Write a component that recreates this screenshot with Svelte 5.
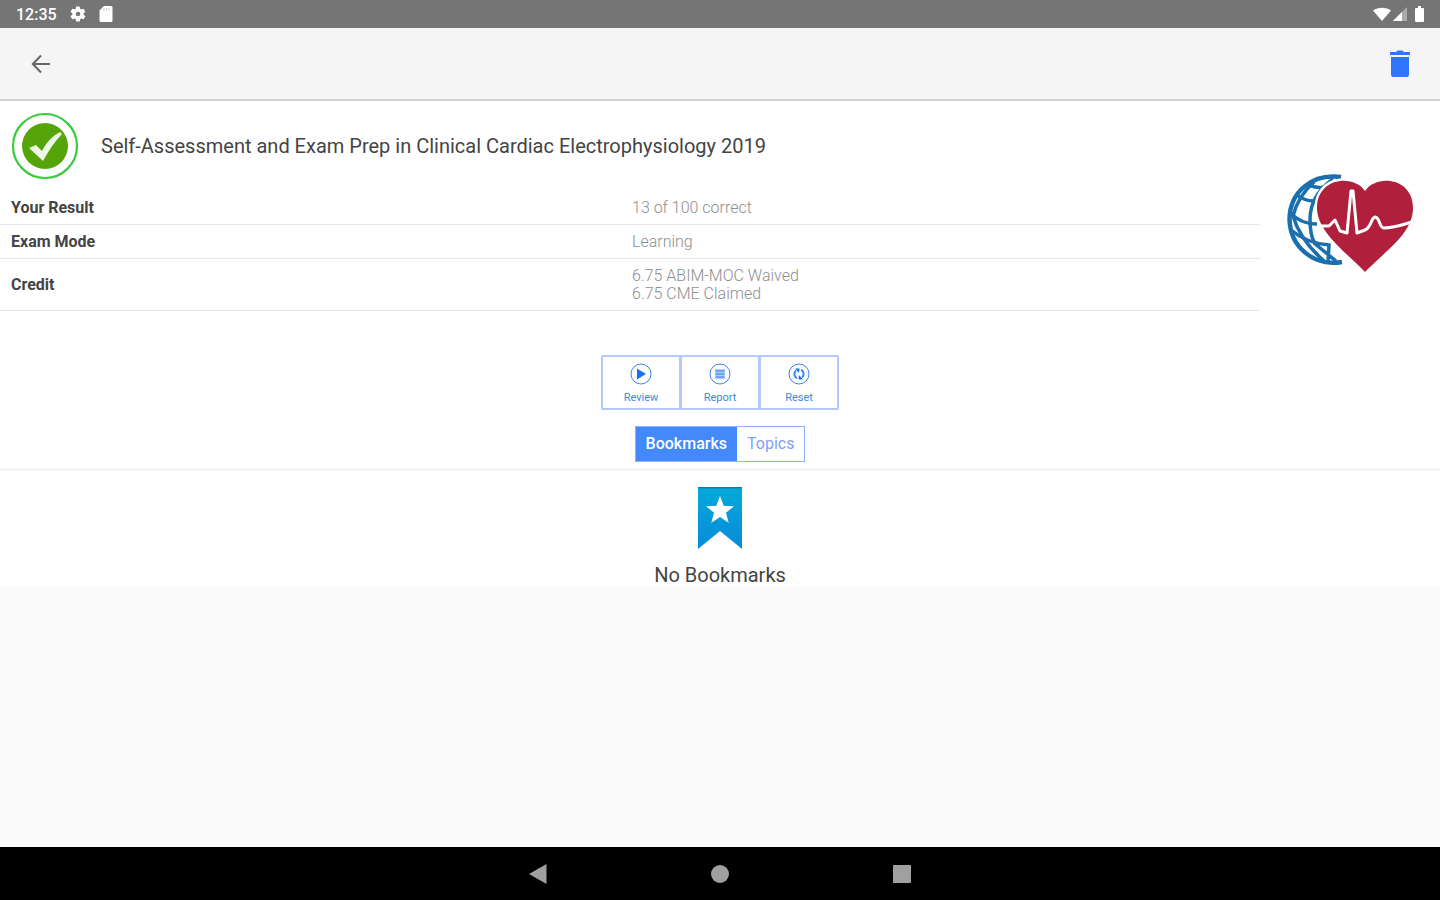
<script lang="ts">
	let tab = $state('Bookmarks');

	const tabs = ['Bookmarks', 'Topics'];

	const results = [
		{ label: 'Your Result', lines: ['13 of 100 correct'] },
		{ label: 'Exam Mode', lines: ['Learning'] },
		{ label: 'Credit', lines: ['6.75 ABIM-MOC Waived', '6.75 CME Claimed'] },
	];

	const actions = ['Review', 'Report', 'Reset'];
</script>

<div class="screen">
	<div class="status-bar">
		<div class="status-group left">
			<span class="time">12:35</span>
			<svg width="18" height="18" viewBox="0 0 24 24" fill="#fff">
				<path d="M19.4 13a7.5 7.5 0 0 0 0-2l2.1-1.6a.5.5 0 0 0 .1-.7l-2-3.4a.5.5 0 0 0-.6-.2l-2.5 1a7.3 7.3 0 0 0-1.7-1l-.4-2.6a.5.5 0 0 0-.5-.4h-4a.5.5 0 0 0-.5.4L9 5.1a7.7 7.7 0 0 0-1.7 1l-2.5-1a.5.5 0 0 0-.6.2l-2 3.4a.5.5 0 0 0 .1.7L4.5 11a7.5 7.5 0 0 0 0 2l-2.2 1.6a.5.5 0 0 0-.1.7l2 3.4c.1.2.4.3.6.2l2.5-1a7.3 7.3 0 0 0 1.7 1l.4 2.6c0 .3.2.4.5.4h4c.3 0 .5-.1.5-.4l.4-2.6a7.7 7.7 0 0 0 1.7-1l2.5 1c.2.1.5 0 .6-.2l2-3.4a.5.5 0 0 0-.1-.7zM12 15a3 3 0 1 1 0-6 3 3 0 0 1 0 6z" />
			</svg>
			<svg width="14" height="18" viewBox="0 0 14 18">
				<path d="M5 1h7a1.5 1.5 0 0 1 1.5 1.5v13A1.5 1.5 0 0 1 12 17H2a1.5 1.5 0 0 1-1.5-1.5V5.5z" fill="#fff" />
				<path d="M5 3v2.5M7.5 3v2.5M10 3v2.5" stroke="#ccc" />
			</svg>
		</div>
		<div class="status-group right">
			<svg width="18" height="14" viewBox="0 0 18 14">
				<path d="M0 3.5C5-.3 13-.3 18 3.5L9 14z" fill="#fff" />
			</svg>
			<svg width="14" height="14" viewBox="0 0 14 14">
				<path d="M14 0v14H0z" fill="#aaa" />
				<path d="M9 5v9H0z" fill="#fff" />
			</svg>
			<svg class="battery" width="9" height="16" viewBox="0 0 9 16">
				<path d="M3 0h3v2h2a1 1 0 0 1 1 1v12a1 1 0 0 1-1 1H1a1 1 0 0 1-1-1V3a1 1 0 0 1 1-1h2z" fill="#fff" />
			</svg>
		</div>
	</div>

	<header class="toolbar">
		<button aria-label="Back">
			<svg width="20" height="20" viewBox="0 0 20 20" fill="none" stroke="#666" stroke-width="2">
				<path d="M19 10H2M10 1.5L1.8 10l8.2 8.5" />
			</svg>
		</button>
		<button aria-label="Delete">
			<svg width="22" height="28" viewBox="0 0 22 28" fill="#2f76fb">
				<path d="M1 2h6l1.5-1.5h5L15 2h6v3H1z" />
				<path d="M2 7h18v18a2 2 0 0 1-2 2H4a2 2 0 0 1-2-2z" />
			</svg>
		</button>
	</header>

	<main>
		<section class="summary">
			<div class="details">
				<div class="heading">
					<svg width="68" height="68" viewBox="0 0 68 68">
						<circle cx="34" cy="34" r="32" fill="#fff" stroke="#3bcb3f" stroke-width="2.2" />
						<circle cx="34" cy="34" r="23" fill="#55a50a" />
						<path d="M18 36l7-3 6 6c4-8 10-15 18-19l2 2c-7 7-13 16-19 27z" fill="#eef6e6" />
					</svg>
					<h1>Self-Assessment and Exam Prep in Clinical Cardiac Electrophysiology 2019</h1>
				</div>
				<table>
					<tbody>
						{#each results as row}
							<tr>
								<th scope="row">{row.label}</th>
								<td>
									{#each row.lines as line}
										<div>{line}</div>
									{/each}
								</td>
							</tr>
						{/each}
					</tbody>
				</table>
			</div>
			<div class="logo">
				<svg width="128" height="100" viewBox="0 0 128 100">
					<!-- globe -->
					<g fill="none" stroke="#1b6fae" stroke-width="3.5">
						<path d="M55 3C26-1 4 18 3.5 45C4 73 28 93 56 88" stroke-width="4.5" />
						<path d="M47 5Q24 22 24 45Q24 60 28 68" />
						<path d="M28 8Q12 22 7 42Q14 66 38 87" />
						<path d="M22 10Q30 15 38 13M10 20Q18 27 28 27M4 38Q14 50 31 50M5 56Q20 69 43 71L42 88M28 69L50 87" />
					</g>
					<!-- heart and pulse -->
					<path d="M79 17C68 0 31 3 31 34C31 58 60 78 79 98C98 78 127 60 127 34C127 3 90 0 79 17z" fill="#b01f3c" stroke="#fff" stroke-width="5" paint-order="stroke" />
					<path d="M33 52h10l6-6 5 11 7 2 4-42h2l4 42 8-3c6-2 6-12 10-13 5 0 4 11 9 11 10 0 18-3 28-6" fill="none" stroke="#fff" stroke-width="3" stroke-linejoin="round" />
				</svg>
			</div>
		</section>

		<section class="controls">
			<div class="actions">
				{#each actions as action}
					<button>
						<svg width="22" height="22" viewBox="0 0 22 22" fill="none" stroke="#3f83f8">
							<circle cx="11" cy="11" r="10" />
							{#if action === 'Review'}
								<path d="M7 5.5l9 5.5-9 5.5z" fill="#1673f5" stroke="none" />
							{:else if action === 'Report'}
								<rect x="6" y="6" width="10" height="10" fill="#a9cbff" stroke="none" />
								<path d="M6.5 8h9M6.5 11h9M6.5 14h9" />
							{:else}
								<path d="M9 15.3A4.700 4.700 0 0 1 8 7.500M13 6.700A4.700 4.700 0 0 1 14 14.500" stroke-width="2" />
								<path d="M7 5.500h4.500L11 10zM15 16.500h-4.500L11 12z" fill="#1673f5" stroke="none" />
							{/if}
						</svg>
						<span>{action}</span>
					</button>
				{/each}
			</div>

			<div class="tabs" role="tablist">
				{#each tabs as name}
					<button role="tab" aria-selected={tab === name} class:active={tab === name} onclick={() => (tab = name)}>
						{name}
					</button>
				{/each}
			</div>
		</section>

		<section class="empty">
			<svg width="46" height="64" viewBox="0 0 46 64">
				<defs>
					<linearGradient id="ribbon" x1="0" y1="0" x2="0" y2="1">
						<stop offset="0" stop-color="#05a9dc" />
						<stop offset="1" stop-color="#078ad8" />
					</linearGradient>
				</defs>
				<path d="M1 1h44v62L23 45 1 63z" fill="url(#ribbon)" />
				<path d="M1 1h44v1.5H1z" fill="#087fae" />
				<path d="M23 10l3.7 9.7 10.3.5-8 6.5 2.7 10L23 31l-8.7 5.7 2.7-10-8-6.5 10.3-.5z" fill="#fff" />
			</svg>
			<p>No {tab}</p>
		</section>
	</main>

	<nav class="nav-bar">
		<button aria-label="Back">
			<svg width="20" height="20" viewBox="0 0 20 20" fill="#a0a0a0"><path d="M18.5 0v20L1 10z" /></svg>
		</button>
		<button aria-label="Home">
			<svg width="20" height="20" viewBox="0 0 20 20" fill="#a0a0a0"><circle cx="10" cy="10" r="9" /></svg>
		</button>
		<button aria-label="Recent apps">
			<svg width="20" height="20" viewBox="0 0 20 20" fill="#a0a0a0"><rect x="1" y="1" width="18" height="18" rx="1" /></svg>
		</button>
	</nav>
</div>

<style>
	:global(body) {
		background: #fafafa;
	}

	.screen {
		display: flex;
		flex-direction: column;
		min-height: 100vh;
		font-family: Roboto, 'Liberation Sans', sans-serif;
		color: #444;
	}

	svg {
		display: block;
		flex: none;
	}

	button {
		font: inherit;
		border: none;
		padding: 0;
		background: none;
		cursor: pointer;
	}

	.status-bar {
		display: flex;
		align-items: center;
		justify-content: space-between;
		height: 28px;
		padding: 0 16px;
		background: #757575;
		color: #fff;
	}

	.status-group {
		display: flex;
		align-items: center;
	}

	.status-group.left {
		gap: 12px;
	}

	.status-group.right {
		gap: 2px;
	}

	.battery {
		margin-left: 6px;
	}

	.time {
		font-size: 16px;
		font-weight: 500;
	}

	.toolbar {
		display: flex;
		align-items: center;
		justify-content: space-between;
		height: 71px;
		padding: 0 29px 0 31px;
		background: #f5f5f5;
		border-bottom: 2px solid #d2d2d2;
	}

	main {
		flex: 1;
	}

	section {
		background: #fff;
	}

	.summary {
		display: grid;
		grid-template-columns: 7fr 1fr;
		align-items: center;
	}

	.details {
		padding-bottom: 36px;
	}

	.heading {
		display: flex;
		align-items: center;
		gap: 22px;
		height: 90px;
		padding-left: 11px;
	}

	h1 {
		margin: 0;
		font-size: 20px;
		font-weight: 400;
	}

	table {
		width: 100%;
		border-collapse: collapse;
		font-size: 16px;
		line-height: 18px;
	}

	th,
	td {
		width: 50%;
		padding: 8px 2px 7px;
		border-bottom: 1px solid #e6e6e6;
		text-align: left;
	}

	th {
		padding-left: 11px;
		font-weight: 700;
	}

	td {
		color: #8e8e8e;
		font-weight: 300;
	}

	.logo {
		display: flex;
		justify-content: center;
	}

	.controls {
		display: flex;
		flex-direction: column;
		align-items: center;
		gap: 16px;
		padding: 8px 0 6px;
		border-bottom: 3px solid #f5f5f5;
	}

	.actions {
		display: grid;
		grid-template-columns: repeat(3, 76px);
		gap: 3px;
		border: 2px solid #b4c9fb;
		border-radius: 2px;
		background: #b4c9fb;
	}

	.actions button {
		display: flex;
		flex-direction: column;
		align-items: center;
		gap: 6px;
		padding: 6px 0 4px;
		background: #fff;
		color: #3f83f8;
		font-size: 11px;
		line-height: 13px;
	}

	.tabs {
		display: flex;
		border: 1px solid #8fb3fa;
	}

	.tabs button {
		padding: 8px 10px;
		color: #7f9ff5;
		font-size: 16px;
		line-height: 18px;
	}

	.tabs button.active {
		background: #4489fb;
		color: #fff;
		font-weight: 500;
	}

	.empty {
		display: flex;
		flex-direction: column;
		align-items: center;
		gap: 14px;
		padding-top: 15px;
	}

	.empty p {
		margin: 0;
		font-size: 20px;
		line-height: 23px;
	}

	.nav-bar {
		display: flex;
		align-items: center;
		justify-content: center;
		gap: 162px;
		height: 53px;
		background: #000;
	}
</style>
